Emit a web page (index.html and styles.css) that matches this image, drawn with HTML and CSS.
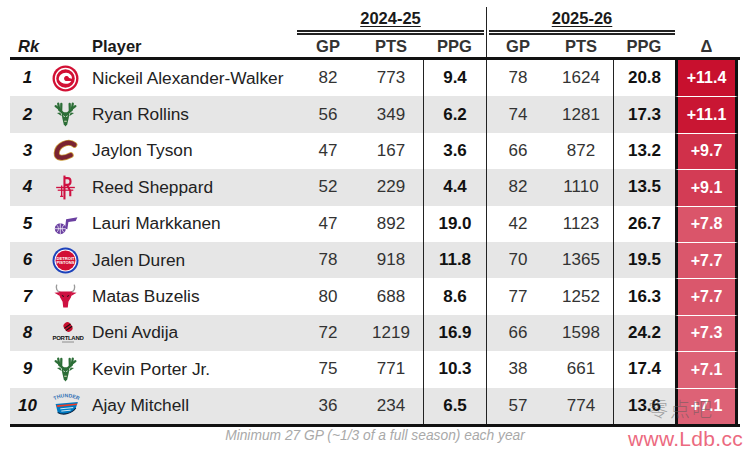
FILE: index.html
```html
<!DOCTYPE html>
<html lang="en">
<head>
<meta charset="utf-8">
<title>PPG risers</title>
<link rel="stylesheet" href="styles.css">
</head>
<body>
<div class="sheet">
  <div class="grid years">
    <div class="yr-pad"></div>
    <div class="yr y1"><span class="yr-text">2024-25</span></div>
    <div class="yr y2"><div class="yr-in"><span class="yr-text">2025-26</span></div></div>
    <div></div>
  </div>

  <div class="grid head">
    <div class="h-rk">Rk</div>
    <div></div>
    <div class="h-player">Player</div>
    <div class="num">GP</div>
    <div class="num">PTS</div>
    <div class="num">PPG</div>
    <div class="num sep">GP</div>
    <div class="num">PTS</div>
    <div class="num">PPG</div>
    <div class="num">Δ</div>
  </div>

  <div class="body">
    <div class="grid row">
      <div class="rk">1</div>
      <div class="logo"><svg viewBox="0 0 26 26" width="27" height="27"><circle cx="13" cy="13" r="12.5" fill="#d21034"/><circle cx="13" cy="13" r="9.6" fill="none" stroke="#fff" stroke-width="1.3"/><path d="M6.6 14.2 C6.3 10 9.6 7.2 13.8 7.4 C17.2 7.6 19.6 10.2 19.2 13.2 L16.4 12.4 C15.8 10.9 14.2 10.3 12.9 10.9 C11.2 11.8 11.2 14.6 13.2 15.3 L18.6 15.3 C16.6 19 9.2 19.4 6.6 14.2 Z" fill="#fff"/><path d="M12.6 13.3 L16.8 13.6" stroke="#d21034" stroke-width="0.9"/><circle cx="14.2" cy="12.1" r="0.75" fill="#d21034"/></svg></div>
      <div class="name">Nickeil Alexander-Walker</div>
      <div class="num">82</div><div class="num">773</div><div class="num ppg sep">9.4</div>
      <div class="num sep">78</div><div class="num">1624</div><div class="num ppg sep">20.8</div>
      <div class="delta first" style="background:rgb(200,16,46)">+11.4</div>
    </div>

    <div class="grid row alt">
      <div class="rk">2</div>
      <div class="logo"><svg viewBox="0 0 26 26" width="27" height="27"><g fill="none" stroke="#2c6e37" stroke-width="2.2" stroke-linecap="round"><path d="M6 2.5 L7 8.5 L10.5 11.5"/><path d="M3.5 5 L6.6 7.4"/><path d="M9 2.8 L8.8 9.6"/><path d="M20 2.5 L19 8.5 L15.5 11.5"/><path d="M22.5 5 L19.4 7.4"/><path d="M17 2.8 L17.2 9.6"/></g><path d="M8 11 L4.8 11.6 L9.5 14.8 Z M18 11 L21.2 11.6 L16.5 14.8 Z" fill="#2c6e37"/><path d="M9.2 10.8 L16.8 10.8 L16.2 16 L14.7 22.5 L13 24.5 L11.3 22.5 L9.8 16 Z" fill="#2c6e37"/><path d="M11 14.3 L12.2 15 M15 14.3 L13.8 15" stroke="#fff" stroke-width="0.9"/><path d="M11.8 19.5 L14.2 19.5" stroke="#e8e3c9" stroke-width="0.9"/></svg></div>
      <div class="name">Ryan Rollins</div>
      <div class="num">56</div><div class="num">349</div><div class="num ppg sep">6.2</div>
      <div class="num sep">74</div><div class="num">1281</div><div class="num ppg sep">17.3</div>
      <div class="delta" style="background:rgb(201,22,51)">+11.1</div>
    </div>

    <div class="grid row">
      <div class="rk">3</div>
      <div class="logo"><svg viewBox="0 0 26 26" width="27" height="27"><path d="M21.5 7.5 C16 3 5 7.5 4.5 15.5 C4.2 20.8 11 21.2 18 17.5" fill="none" stroke="#c99a3a" stroke-width="5.8" stroke-linecap="round"/><path d="M21.5 7.5 C16 3 5 7.5 4.5 15.5 C4.2 20.8 11 21.2 18 17.5" fill="none" stroke="#7a2331" stroke-width="4.2" stroke-linecap="round"/></svg></div>
      <div class="name">Jaylon Tyson</div>
      <div class="num">47</div><div class="num">167</div><div class="num ppg sep">3.6</div>
      <div class="num sep">66</div><div class="num">872</div><div class="num ppg sep">13.2</div>
      <div class="delta" style="background:rgb(208,48,74)">+9.7</div>
    </div>

    <div class="grid row alt">
      <div class="rk">4</div>
      <div class="logo"><svg viewBox="0 0 26 26" width="27" height="27"><g fill="none" stroke="#ce1141" stroke-width="2"><path d="M12 1.5 L12 24.5"/><path d="M12 4 L15 4 C18.8 4 18.8 10.5 15 10.5 L12 10.5 M14.5 10.5 L17.6 16.5 L17.6 21.5"/><path d="M4 13 L22 13" stroke-width="1.3"/><path d="M5.5 15.6 L20.5 15.6" stroke-width="1.2"/><path d="M9.3 11 L9.3 21.5 M7.8 21.5 L10.8 21.5" stroke-width="1.3"/></g></svg></div>
      <div class="name">Reed Sheppard</div>
      <div class="num">52</div><div class="num">229</div><div class="num ppg sep">4.4</div>
      <div class="num sep">82</div><div class="num">1110</div><div class="num ppg sep">13.5</div>
      <div class="delta" style="background:rgb(211,60,85)">+9.1</div>
    </div>

    <div class="grid row">
      <div class="rk">5</div>
      <div class="logo"><svg viewBox="0 0 26 26" width="27" height="27"><path d="M12.5 18 L13.6 9 L24.5 7 L22.8 10.6 L15.8 11.6 L14.8 18.5 Z" fill="#6a3fa0"/><circle cx="8" cy="18" r="5.3" fill="#6a3fa0"/><g fill="none" stroke="#fff" stroke-width="0.7"><path d="M2.7 18 L13.3 18"/><path d="M8 12.7 L8 23.3"/><path d="M4.3 14.3 C6.8 16 6.8 20 4.3 21.7"/><path d="M11.7 14.3 C9.2 16 9.2 20 11.7 21.7"/></g></svg></div>
      <div class="name">Lauri Markkanen</div>
      <div class="num">47</div><div class="num">892</div><div class="num ppg sep">19.0</div>
      <div class="num sep">42</div><div class="num">1123</div><div class="num ppg sep">26.7</div>
      <div class="delta" style="background:rgb(218,85,106)">+7.8</div>
    </div>

    <div class="grid row alt">
      <div class="rk">6</div>
      <div class="logo"><svg viewBox="0 0 26 26" width="27" height="27"><circle cx="13" cy="13" r="12.5" fill="#1d42ba"/><circle cx="13" cy="13" r="10.6" fill="#fff"/><circle cx="13" cy="13" r="9.6" fill="#d21034"/><text x="13" y="12.2" text-anchor="middle" font-family="Liberation Sans, sans-serif" font-weight="bold" font-size="4" fill="#fff">DETROIT</text><text x="13" y="16.6" text-anchor="middle" font-family="Liberation Sans, sans-serif" font-weight="bold" font-size="4" fill="#fff">PISTONS</text></svg></div>
      <div class="name">Jalen Duren</div>
      <div class="num">78</div><div class="num">918</div><div class="num ppg sep">11.8</div>
      <div class="num sep">70</div><div class="num">1365</div><div class="num ppg sep">19.5</div>
      <div class="delta" style="background:rgb(218,87,108)">+7.7</div>
    </div>

    <div class="grid row">
      <div class="rk">7</div>
      <div class="logo"><svg viewBox="0 0 26 26" width="27" height="27"><g fill="none" stroke="#9a9a9a" stroke-width="1.3" stroke-linecap="round"><path d="M8 9 C4.5 8 3.5 5 4.5 2"/><path d="M18 9 C21.5 8 22.5 5 21.5 2"/></g><path d="M6.8 8.3 L19.2 8.3 L18.4 13.5 L15.8 18 L15.2 23.5 L10.8 23.5 L10.2 18 L7.6 13.5 Z" fill="#ce1141"/><path d="M7.5 8.8 L2.3 9.3 L7.6 12.6 Z M18.5 8.8 L23.7 9.3 L18.4 12.6 Z" fill="#ce1141"/><path d="M9.5 12 L11.5 13 M16.5 12 L14.5 13" stroke="#111" stroke-width="0.9"/></svg></div>
      <div class="name">Matas Buzelis</div>
      <div class="num">80</div><div class="num">688</div><div class="num ppg sep">8.6</div>
      <div class="num sep">77</div><div class="num">1252</div><div class="num ppg sep">16.3</div>
      <div class="delta" style="background:rgb(218,87,108)">+7.7</div>
    </div>

    <div class="grid row alt">
      <div class="rk">8</div>
      <div class="logo"><svg viewBox="0 0 32 26" width="32" height="26"><g transform="translate(16 7) rotate(-35)"><rect x="-3.8" y="-5" width="7.6" height="10" rx="3.8" fill="#c8102e"/><path d="M-3.8 -1 L3.8 -1 M-3.8 1.8 L3.8 1.8" stroke="#111" stroke-width="1.1"/></g><text x="16" y="19.5" text-anchor="middle" font-family="Liberation Sans, sans-serif" font-weight="bold" font-size="6" fill="#111" letter-spacing="-0.3">PORTLAND</text><path d="M10 22 L22 22" stroke="#777" stroke-width="0.8"/></svg></div>
      <div class="name">Deni Avdija</div>
      <div class="num">72</div><div class="num">1219</div><div class="num ppg sep">16.9</div>
      <div class="num sep">66</div><div class="num">1598</div><div class="num ppg sep">24.2</div>
      <div class="delta" style="background:rgb(220,94,115)">+7.3</div>
    </div>

    <div class="grid row">
      <div class="rk">9</div>
      <div class="logo"><svg viewBox="0 0 26 26" width="27" height="27"><g fill="none" stroke="#2c6e37" stroke-width="2.2" stroke-linecap="round"><path d="M6 2.5 L7 8.5 L10.5 11.5"/><path d="M3.5 5 L6.6 7.4"/><path d="M9 2.8 L8.8 9.6"/><path d="M20 2.5 L19 8.5 L15.5 11.5"/><path d="M22.5 5 L19.4 7.4"/><path d="M17 2.8 L17.2 9.6"/></g><path d="M8 11 L4.8 11.6 L9.5 14.8 Z M18 11 L21.2 11.6 L16.5 14.8 Z" fill="#2c6e37"/><path d="M9.2 10.8 L16.8 10.8 L16.2 16 L14.7 22.5 L13 24.5 L11.3 22.5 L9.8 16 Z" fill="#2c6e37"/><path d="M11 14.3 L12.2 15 M15 14.3 L13.8 15" stroke="#fff" stroke-width="0.9"/><path d="M11.8 19.5 L14.2 19.5" stroke="#e8e3c9" stroke-width="0.9"/></svg></div>
      <div class="name">Kevin Porter Jr.</div>
      <div class="num">75</div><div class="num">771</div><div class="num ppg sep">10.3</div>
      <div class="num sep">38</div><div class="num">661</div><div class="num ppg sep">17.4</div>
      <div class="delta" style="background:rgb(221,98,118)">+7.1</div>
    </div>

    <div class="grid row alt">
      <div class="rk">10</div>
      <div class="logo"><svg viewBox="0 0 28 26" width="29" height="27"><path d="M3 7.5 Q14 2.5 25 7.5" fill="none" stroke="none" id="arc"/><text font-family="Liberation Sans, sans-serif" font-weight="bold" font-size="5" fill="#2f6fb5"><textPath href="#arc" startOffset="50%" text-anchor="middle">THUNDER</textPath></text><path d="M3.5 11.5 L25 9.5 L23 15.5 C19.5 20.8 11 23 5.5 19.8 Z" fill="#007ac1"/><path d="M4.5 12.8 L24.5 11 L24 12.6 L5 14.5 Z" fill="#ef3b24"/><path d="M8 16.2 L20.5 15 M9 18.4 L18 17.5" stroke="#fff" stroke-width="0.8"/><path d="M5.5 19.8 C11 23 19.5 20.8 23 15.5" fill="none" stroke="#0b2240" stroke-width="1"/></svg></div>
      <div class="name">Ajay Mitchell</div>
      <div class="num">36</div><div class="num">234</div><div class="num ppg sep">6.5</div>
      <div class="num sep">57</div><div class="num">774</div><div class="num ppg sep">13.6</div>
      <div class="delta" style="background:rgb(221,98,118)">+7.1</div>
    </div>
  </div>

  <p class="note">Minimum 27 GP (~1/3 of a full season) each year</p>

  <div class="wm-cn">零点吧</div>
  <div class="wm-url">www.Ldb.cc</div>
</div>
</body>
</html>
```

FILE: styles.css
```css
* { box-sizing: border-box; }

html, body {
  margin: 0;
  padding: 0;
  background: #ffffff;
}

body {
  font-family: "Liberation Sans", Arial, sans-serif;
  color: #222;
}

.sheet {
  position: relative;
  width: 750px;
  height: 450px;
  padding: 7px 10px 0 10px;
  overflow: hidden;
}

.grid {
  display: grid;
  grid-template-columns: 40px 38px 209px 62px 64px 63px 63px 64px 62px 63px;
}

/* season header row */
.years {
  height: 28px;
}

.yr-pad {
  grid-column: span 3;
}

.yr {
  grid-column: span 3;
  font-weight: bold;
  font-size: 16.5px;
  color: #1a1a1a;
}

.yr-text {
  text-decoration: underline;
  text-underline-offset: 2px;
  text-decoration-thickness: 1px;
}

.y1 {
  margin-right: 2px;
  border-bottom: 5px double #222;
  display: flex;
  justify-content: center;
  padding-top: 2px;
}

.y2 {
  border-left: 1.5px solid #222;
  display: flex;
}

.yr-in {
  flex: 1;
  margin-left: 2px;
  border-bottom: 5px double #222;
  display: flex;
  justify-content: center;
  padding-top: 2px;
}

/* column header row */
.head {
  height: 25px;
  border-bottom: 3px solid #111;
  font-weight: bold;
  font-size: 16.5px;
  color: #1a1a1a;
  align-items: center;
}

.head > div {
  height: 100%;
  display: flex;
  align-items: center;
}

.head .num {
  justify-content: center;
}

.head .sep {
  border-left: 1.5px solid #222;
}

.h-rk {
  font-style: italic;
  padding-left: 8px;
}

.h-player {
  padding-left: 4px;
}

/* body rows */
.body {
  border-bottom: 3px solid #111;
}

.row {
  height: 36.4px;
  font-size: 17px;
}

.row > div {
  display: flex;
  align-items: center;
  height: 100%;
}

.row.alt > div {
  background: #e6e6e6;
}

.rk {
  justify-content: center;
  padding-right: 5px;
  font-weight: bold;
  font-style: italic;
  color: #111;
}

.logo {
  padding-left: 2px;
}

.logo svg {
  display: block;
}

.name {
  padding-left: 4px;
  color: #222;
  font-size: 17.3px;
}

.num {
  justify-content: center;
  color: #333;
}

.row .sep {
  border-left: 1.5px solid #222;
}

.ppg {
  font-weight: bold;
  color: #111;
}

.row > .delta,
.row.alt > .delta {
  justify-content: center;
  color: #fff;
  font-weight: bold;
  font-size: 16px;
  border-left: 3px solid #111;
  border-right: 3px solid #111;
  border-top: 1.5px solid #ffffff;
}

.row > .delta.first {
  border-top: none;
}

.note {
  margin: 0;
  padding-top: 1px;
  text-align: center;
  font-size: 13.8px;
  font-style: italic;
  color: #a9a9a9;
  line-height: 16px;
}

/* site watermark overlay */
.wm-cn {
  position: absolute;
  left: 648px;
  top: 394px;
  font-family: "Noto Sans CJK SC", sans-serif;
  font-size: 20px;
  font-weight: 300;
  color: rgba(90, 90, 90, 0.5);
  letter-spacing: 2px;
}

.wm-url {
  position: absolute;
  left: 628px;
  top: 427px;
  font-size: 21px;
  color: #ec6a80;
  letter-spacing: 0.3px;
}
```
